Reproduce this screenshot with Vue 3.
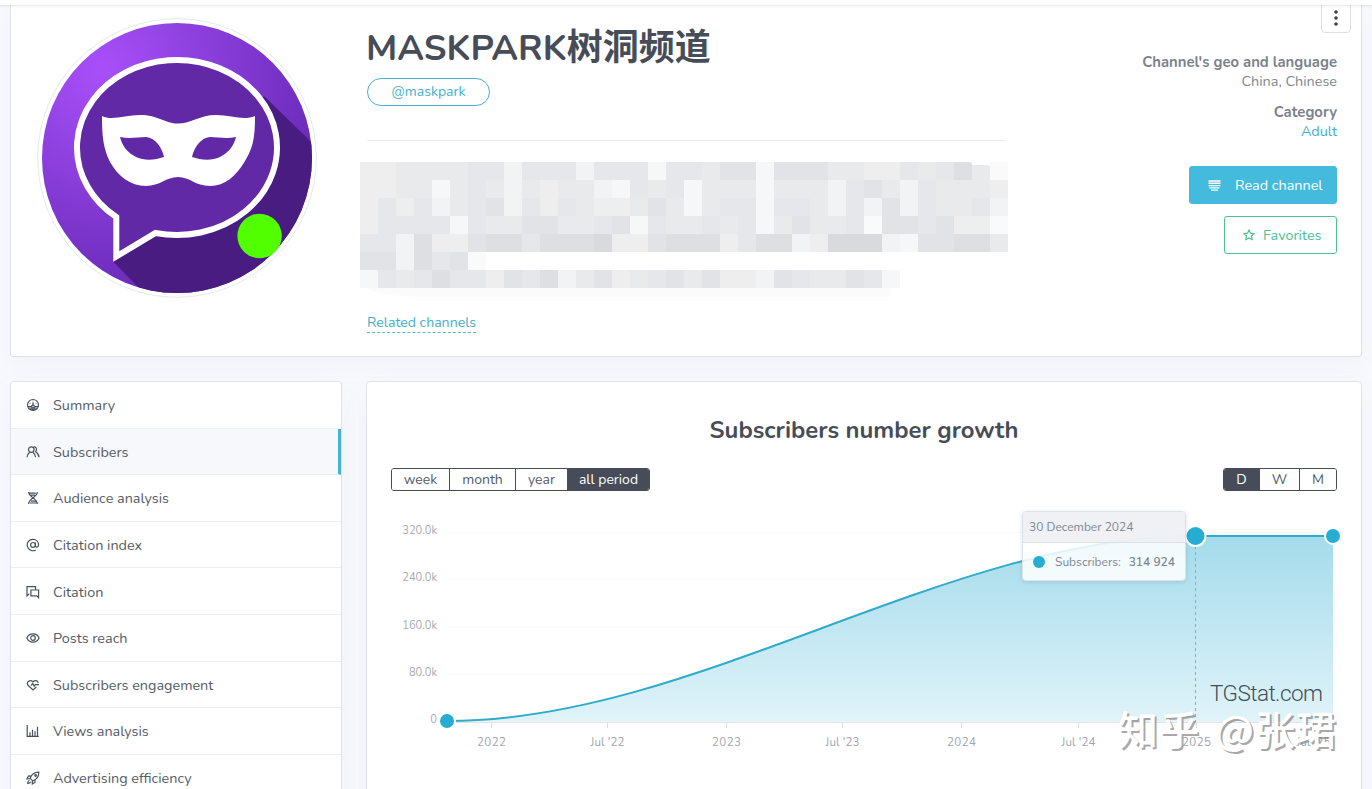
<script setup>
import { ref } from 'vue'

const menu = [
  { id: 'summary', label: 'Summary' },
  { id: 'subscribers', label: 'Subscribers' },
  { id: 'audience', label: 'Audience analysis' },
  { id: 'index', label: 'Citation index' },
  { id: 'citation', label: 'Citation' },
  { id: 'reach', label: 'Posts reach' },
  { id: 'engagement', label: 'Subscribers engagement' },
  { id: 'views', label: 'Views analysis' },
  { id: 'ads', label: 'Advertising efficiency' }
]

const periods = ['week', 'month', 'year', 'all period']
const groups = ['D', 'W', 'M']

const activeMenu = ref('subscribers')
const activePeriod = ref('all period')
const activeGroup = ref('D')

// one letter per block, "." is an empty block
const mosaic = [
  'ffeeeeddgdddgdddhddecchccceeffdedbei',
  'ffeehedegefeeghdedheeeheeegdcegdeeef',
  'fdfdgedcgdfdeffeceheddhddegdgcgdeedg',
  'fddddhdeecceedchdeededheceediccdcffi',
  'ddgbffcbbdbbbaffcbbbfdbbgfaaaghccbbe',
  'ccgbdci.............................',
  'hdedbddfcdbgecfedcecffgcdeecdh......'
]

const yLabels = [
  { text: '320.0k', y: 532.5 },
  { text: '240.0k', y: 579.5 },
  { text: '160.0k', y: 627 },
  { text: '80.0k', y: 674 },
  { text: '0', y: 721.5 }
]

const xLabels = [
  { text: '2022', x: 491.5, w: 29 },
  { text: "Jul '22", x: 607.5, w: 34 },
  { text: '2023', x: 726.5, w: 29 },
  { text: "Jul '23", x: 842.5, w: 34 },
  { text: '2024', x: 961.5, w: 29 },
  { text: "Jul '24", x: 1078.5, w: 34 },
  { text: '2025', x: 1196.5, w: 29 },
  { text: "Jul '25", x: 1313.5, w: 34 }
]
</script>

<template>
  <div class="page">
    <header class="topbar"></header>

    <section class="card channel">
      <div class="avatar">
        <svg viewBox="37 18 280 280" width="280" height="280">
          <defs>
            <radialGradient id="purple" gradientUnits="userSpaceOnUse" cx="102" cy="70" r="270">
              <stop offset="0" stop-color="#a94ffa" />
              <stop offset="0.3" stop-color="#9243e3" />
              <stop offset="0.7" stop-color="#7430c3" />
              <stop offset="1" stop-color="#5f27a8" />
            </radialGradient>
            <clipPath id="disc"><circle cx="177" cy="158" r="135" /></clipPath>
          </defs>
          <circle cx="177" cy="158" r="139.3" fill="#fff" stroke="#dbe5e4" stroke-width="0.8" />
          <g clip-path="url(#disc)">
            <rect x="37" y="18" width="280" height="280" fill="url(#purple)" />
            <path d="M113.5 262 L200 350 H340 V170 L264 96 Z" fill="#481c81" />
            <path d="M155.5 232.95 A100 87.5 0 1 0 116.3 217.04 V256.5 Z" fill="#6129a5" stroke="#fff" stroke-width="6" />
            <path
              d="M102 116 C112 121 125 115 140 115 C158 115 165 123.5 178 123.5 C191 123.5 200 115 216 115 C232 115 243 121 255 116 C255 138 253 148 245 161 C236 176 225 186 210 186 C195 186 190 177 178 177 C166 177 160 186 146 186 C130 186 118 176 110 162 C103 148 102 135 102 116 Z"
              fill="#fff"
            />
            <path d="M120 137 C130 139 138 137 146 137 C156 138 162 148 164 157 C155 160 145 161 136 157 C128 153 122 146 120 137 Z" fill="#6129a5" />
            <path d="M236 137 C226 139 218 137 210 137 C200 138 194 148 192 157 C201 160 211 161 220 157 C228 153 234 146 236 137 Z" fill="#6129a5" />
          </g>
          <circle cx="259.6" cy="236" r="22.2" fill="#52ff00" />
        </svg>
      </div>

      <div class="about">
        <h1>MASKPARK<span class="cjk">树洞频道</span></h1>
        <a class="handle"><span>@maskpark</span></a>
        <hr />
        <div class="mosaic">
          <div v-for="(row, r) in mosaic" :key="r" class="mosaic-row">
            <i v-for="(c, i) in row.split('')" :key="i" :class="c === '.' ? 'none' : 'tone-' + c"></i>
          </div>
          <div class="mosaic-tail"></div>
        </div>
        <a class="related">Related channels</a>
      </div>

      <div class="side">
        <button class="more">
          <svg width="6" height="18" viewBox="0 0 6 18" fill="#3b424c">
            <circle cx="3" cy="3" r="1.8" /><circle cx="3" cy="9" r="1.8" /><circle cx="3" cy="15" r="1.8" />
          </svg>
        </button>
        <div class="meta">
          <b>Channel's geo and language</b>
          <span>China, Chinese</span>
          <b class="cat">Category</b>
          <a>Adult</a>
        </div>
        <button class="btn read">
          <svg width="13" height="11" viewBox="0 0 13 11" stroke="#fff" stroke-width="1.4">
            <path d="M0.5 1H12.5M0.5 3.3H12.5M0.5 5.6H12.5M1.5 7.9H11.5M3 10.1H10" />
          </svg>
          <span>Read channel</span>
        </button>
        <button class="btn fav">
          <svg width="12" height="12" viewBox="0 0 12 12" fill="none" stroke="#4fc08f" stroke-width="1.2" stroke-linejoin="round">
            <path d="M6 0.9 L7.5 4.2 L11.2 4.6 L8.5 7 L9.3 10.8 L6 8.9 L2.7 10.8 L3.5 7 L0.8 4.6 L4.5 4.2 Z" />
          </svg>
          <span>Favorites</span>
        </button>
      </div>
    </section>

    <div class="columns">
      <nav class="card menu">
        <a
          v-for="item in menu"
          :key="item.id"
          class="menu-item"
          :class="{ active: item.id === activeMenu }"
          @click="activeMenu = item.id"
        >
          <svg class="menu-icon" viewBox="0 0 14 14" width="14" height="14">
            <g v-if="item.id === 'summary'">
              <circle cx="7" cy="7" r="5.5" />
              <path d="M2 8.5H5.4M8.6 8.5H12M2.7 10H11.3M4 11.4H10" />
              <path d="M7 4.2V8" /><circle cx="7" cy="8.6" r="1.4" />
              <path d="M3.6 5.5H4.4M9.6 5.5H10.4M7 2.6V3.2" stroke-width="0.9" />
            </g>
            <g v-else-if="item.id === 'subscribers'">
              <circle cx="5.3" cy="4.6" r="2.8" />
              <path d="M1 12.2C1 9.7 2.2 8.6 3.7 7.3M9.5 12.2C9.5 9.7 8.4 8.6 6.9 7.3M7.6 2.1C10.2 1.3 11.6 4.6 9.6 6.7C11.7 8 13 9.5 13 12.2" />
            </g>
            <g v-else-if="item.id === 'audience'">
              <path d="M2.6 1C2.8 6.5 11.2 7 11.4 13M11.4 1C11.2 6.5 2.8 7 2.6 13M3 2.2H9.8M4 4.2H9M5 10.2H10M4 12H11" />
            </g>
            <g v-else-if="item.id === 'index'">
              <circle cx="7" cy="6.9" r="2.4" />
              <path d="M9.4 4.4V7.7C9.4 9.8 12.6 9.6 12.6 6.8C12.5 3.5 10 1.3 7 1.3A5.7 5.7 0 1 0 9.8 11.9" />
            </g>
            <g v-else-if="item.id === 'citation'">
              <path d="M3.4 9H2.9L1 10.8V1.6H9.5V5" />
              <path d="M4.9 5H12.6V12.7L10.8 10.8H4.9Z" />
            </g>
            <g v-else-if="item.id === 'reach'">
              <path d="M0.9 7C3.2 1.5 10.8 1.5 13.1 7C10.8 12.5 3.2 12.5 0.9 7Z" />
              <circle cx="7" cy="7" r="2.3" />
            </g>
            <g v-else-if="item.id === 'engagement'">
              <path d="M12.2 4.9C11.6 2.2 8.8 1.9 7 3.8C4 0.9 -0.2 3.8 2 7.3L7 12L10.3 9M5 7.5L6.8 5.6L8.2 8.2L9.3 6.7H13" />
            </g>
            <g v-else-if="item.id === 'views'">
              <path d="M1.2 1V12.4H12.8M4 12V8.2M6.5 12V5.8M9 12V7.2M11.5 12V2.7" />
            </g>
            <g v-else>
              <path d="M4.2 7.4C5.4 3.5 8.4 1.2 12.8 1.2C12.9 5.7 10.6 8.6 6.7 9.9ZM5 5.2L2.6 5L1 7.8L4 7.7M9 9L9 11.4L6.3 13L6.4 10M3.4 9.3C2 9.8 1.8 11 1.7 12.4C3 12.3 4.2 12 4.8 10.7" />
              <circle cx="9.6" cy="4.5" r="0.8" />
            </g>
          </svg>
          <span>{{ item.label }}</span>
        </a>
      </nav>

      <main class="card growth">
        <h2>Subscribers number growth</h2>
        <div class="toolbar">
          <div class="switch periods">
            <button
              v-for="p in periods"
              :key="p"
              :class="{ on: p === activePeriod }"
              @click="activePeriod = p"
            >{{ p }}</button>
          </div>
          <div class="switch groups">
            <button
              v-for="g in groups"
              :key="g"
              :class="{ on: g === activeGroup }"
              @click="activeGroup = g"
            >{{ g }}</button>
          </div>
        </div>

        <div class="chart">
          <svg viewBox="391 503 946 270" width="946" height="270">
            <defs>
              <linearGradient id="area" x1="0" y1="0" x2="0" y2="1">
                <stop offset="0" stop-color="#a4dbeb" />
                <stop offset="1" stop-color="#e0f3f9" />
              </linearGradient>
            </defs>
            <g class="y-axis">
              <template v-for="l in yLabels" :key="l.text">
                <path :d="`M447 ${l.y}H1333`" stroke="#f8f8f9" />
                <text x="437" :y="l.y + 1.7">{{ l.text }}</text>
              </template>
            </g>
            <path d="M447 721 C696 721 946 536 1195 536 H1333 V721.5 H447 Z" fill="url(#area)" />
            <path d="M447 722.5H1333" stroke="#dfe3e6" />
            <g class="x-axis">
              <template v-for="l in xLabels" :key="l.text">
                <path :d="`M${l.x} 723V728`" stroke="#dcdfe3" />
                <text :x="l.x" y="746" :textLength="l.w">{{ l.text }}</text>
              </template>
            </g>
            <path d="M1195.5 546V722" stroke="#86afba" stroke-dasharray="3 3" />
            <path d="M447 721 C696 721 946 536 1195 536 H1333" fill="none" stroke="#2fabcb" stroke-width="2" />
            <g fill="#27add2" stroke="#fff" stroke-width="2">
              <circle cx="447" cy="721" r="8" />
              <circle cx="1195.5" cy="536" r="10" />
              <circle cx="1333" cy="536" r="8" />
            </g>
            <text class="brand" x="1210" y="701" textLength="113">TGStat.com</text>
          </svg>
          <div class="tooltip">
            <div class="tooltip-title">30 December 2024</div>
            <div class="tooltip-body">
              <i></i>
              <span>Subscribers:</span>
              <b>314 924</b>
            </div>
          </div>
          <div class="watermark">知乎 @张珺</div>
        </div>
      </main>
    </div>
  </div>
</template>

<style>
body {
  overflow: hidden;
  background: #f8f9fd;
}
</style>

<style scoped>
.page {
  height: 789px;
  overflow: hidden;
  font-family: Nunito, Lato, "Noto Sans CJK SC", sans-serif;
  font-size: 14.4px;
  color: #555c66;
}

.page * {
  box-sizing: border-box;
}

button {
  font-family: inherit;
  padding: 0;
  margin: 0;
}

.topbar {
  position: relative;
  z-index: 2;
  height: 5px;
  background: #fff;
  box-shadow: 0 1px 3px rgba(60, 60, 70, 0.13);
}

.card {
  background: #fff;
  border: 1px solid #dee2e9;
  border-radius: 4px;
  box-shadow: 0 8px 24px rgba(140, 152, 190, 0.07);
}

.channel {
  display: flex;
  height: 352px;
  margin: 0 10px 24px;
  border-top: 0;
  border-radius: 0 0 4px 4px;
}

.avatar {
  padding: 13px 0 0 26px;
  width: 356px;
}

.about {
  width: 639px;
}

h1 {
  margin: 19px 0 0 -1px;
  height: 43px;
  line-height: 40px;
  font-size: 36px;
  font-weight: 700;
  color: #464d58;
  white-space: nowrap;
}

.cjk {
  font-family: "Noto Sans CJK SC", sans-serif;
}

.handle {
  display: flex;
  align-items: center;
  justify-content: center;
  width: 123px;
  height: 28px;
  margin-top: 11px;
  padding-bottom: 2px;
  border: 1px solid #44b0ce;
  border-radius: 14px;
  color: #44b0ce;
  font-size: 14px;
}

hr {
  height: 1px;
  margin: 34px 0 21px;
  border: 0;
  background: #ebecee;
}

.mosaic {
  width: 648px;
  height: 136px;
  margin-left: -7px;
  overflow: hidden;
}

.mosaic-row {
  display: flex;
  height: 18px;
}

.mosaic-row i {
  width: 18px;
  height: 18px;
}

.mosaic-row:first-child i:nth-child(34) {
  border-top-right-radius: 5px 2px;
}

.mosaic-row:first-child i:nth-child(35) {
  height: 15px;
  margin-top: 3px;
  border-top-right-radius: 3px;
}

.mosaic-tail {
  width: 522px;
  height: 9px;
  margin-left: 9px;
  background: #fbfbfb;
  border-radius: 0 0 6px 60px / 0 0 4px 9px;
}

.tone-a { background: #d9dade; }
.tone-b { background: #dddfe2; }
.tone-c { background: #e1e3e6; }
.tone-d { background: #e5e7ea; }
.tone-e { background: #e9eaec; }
.tone-f { background: #eeeeef; }
.tone-g { background: #f2f3f4; }
.tone-h { background: #f6f7f8; }
.tone-i { background: #fafafb; }

.related {
  display: inline-block;
  margin-top: 15px;
  height: 20px;
  line-height: 20px;
  border-bottom: 1px dashed #5fb5cc;
  color: #44aecb;
  font-size: 14.1px;
}

.side {
  flex: 1;
  display: flex;
  flex-direction: column;
  align-items: flex-end;
  padding-right: 24px;
}

.more {
  display: flex;
  align-items: center;
  justify-content: center;
  width: 30px;
  height: 30px;
  margin: -2px -14px 0 0;
  background: #fff;
  border: 1px solid #dcdfe4;
  border-radius: 4px;
}

.meta {
  display: flex;
  flex-direction: column;
  align-items: flex-end;
  height: 133px;
  padding-top: 19px;
  line-height: 20px;
  color: #808791;
}

.meta b {
  font-size: 14.85px;
  color: #7b828d;
}

.meta span,
.meta a {
  line-height: 18px;
  margin-bottom: 2px;
}

.meta .cat {
  margin-top: 10px;
}

.meta a {
  color: #44aecb;
}

.btn {
  display: flex;
  align-items: center;
  height: 38px;
  border-radius: 3px;
  font-size: 14.4px;
}

.btn svg {
  display: block;
}

.read {
  width: 148px;
  padding-left: 18px;
  gap: 14px;
  border: 1px solid #44badc;
  background: #44badc;
  color: #fff;
}

.fav {
  width: 113px;
  margin-top: 12px;
  padding-left: 18px;
  gap: 8px;
  border: 1px solid #4fc08f;
  background: #fff;
  color: #4fc08f;
}

.columns {
  display: flex;
  gap: 24px;
  padding: 0 10px;
}

.menu {
  width: 332px;
  height: 440px;
}

.menu-item {
  display: flex;
  align-items: center;
  height: 46.6px;
  padding: 1px 0 0 15px;
  gap: 13px;
  border-bottom: 1px solid #eceef1;
}

.menu-item.active {
  background: #f7f8fb;
  border-right: 3px solid #44b4d6;
}

.menu-icon {
  fill: none;
  stroke: #4a515c;
  stroke-width: 1.2;
}

.growth {
  width: 996px;
  height: 440px;
  padding: 0 24px;
}

h2 {
  margin: 32px 0 0;
  line-height: 32px;
  text-align: center;
  font-size: 23.85px;
  font-weight: 700;
  color: #464d58;
}

.toolbar {
  display: flex;
  justify-content: space-between;
  margin-top: 22px;
}

.switch {
  display: flex;
  height: 23px;
  border: 1px solid #464d58;
  border-radius: 3px;
  overflow: hidden;
}

.switch button {
  border: 0;
  border-left: 1px solid #464d58;
  background: #fff;
  color: #555c66;
  font-size: 14px;
  line-height: 20px;
}

.switch button:first-child {
  border-left: 0;
}

.switch .on {
  background: #464d58;
  color: #fff;
}

.periods button:nth-child(1) { width: 57px; }
.periods button:nth-child(2) { width: 66px; }
.periods button:nth-child(3) { width: 52px; }
.periods button:nth-child(4) { width: 82px; }

.groups button:nth-child(1) { width: 35px; }
.groups button:nth-child(2) { width: 40px; }
.groups button:nth-child(3) { width: 37px; }

.chart {
  position: relative;
  margin-top: 12px;
  height: 270px;
}

.chart svg {
  display: block;
  overflow: visible;
}

.y-axis text {
  font-size: 11.1px;
  text-anchor: end;
  fill: #a6abb1;
}

.x-axis text {
  font-size: 11.5px;
  text-anchor: middle;
  fill: #a0a5ab;
}

.brand {
  font-family: Roboto, "Liberation Sans", sans-serif;
  font-size: 22.5px;
  font-weight: 300;
  fill: #3e5059;
}

.tooltip {
  position: absolute;
  left: 631px;
  top: 8px;
  width: 164px;
  height: 70px;
  border: 1px solid #dde2e6;
  border-radius: 4px;
  background: rgba(255, 255, 255, 0.86);
  box-shadow: 0 1px 4px rgba(50, 70, 90, 0.16);
  overflow: hidden;
  font-size: 12px;
  color: #7c8794;
}

.tooltip-title {
  height: 31px;
  line-height: 31px;
  padding-left: 6px;
  background: rgba(235, 238, 241, 0.8);
  border-bottom: 1px solid #dde1e6;
}

.tooltip-body {
  display: flex;
  align-items: center;
  height: 38px;
  padding-left: 10px;
}

.tooltip-body i {
  width: 12px;
  height: 12px;
  margin-right: 10px;
  border-radius: 50%;
  background: #27add2;
}

.tooltip-body b {
  margin-left: 8px;
  font-weight: 600;
}

.watermark {
  position: absolute;
  left: 727px;
  top: 195px;
  line-height: 60px;
  white-space: nowrap;
  font-family: "Noto Sans CJK SC", sans-serif;
  font-size: 40px;
  font-weight: 500;
  letter-spacing: 1px;
  word-spacing: 5px;
  color: #fff;
  text-shadow: 2px 2px 0 rgba(130, 130, 130, 0.7);
}
</style>
